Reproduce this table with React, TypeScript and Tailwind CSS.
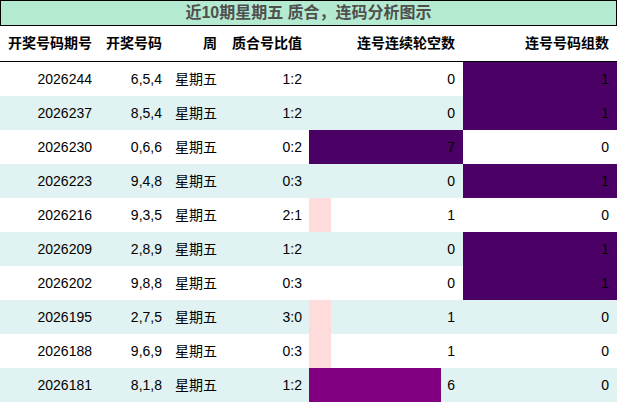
import React from "react";

const rows = [
  ["2026244", "6,5,4", "1:2", 0, 1],
  ["2026237", "8,5,4", "1:2", 0, 1],
  ["2026230", "0,6,6", "0:2", 7, 0],
  ["2026223", "9,4,8", "0:3", 0, 1],
  ["2026216", "9,3,5", "2:1", 1, 0],
  ["2026209", "2,8,9", "1:2", 0, 1],
  ["2026202", "9,8,8", "0:3", 0, 1],
  ["2026195", "2,7,5", "3:0", 1, 0],
  ["2026188", "9,6,9", "0:3", 1, 0],
  ["2026181", "8,1,8", "1:2", 6, 0],
] as const;

const gapColor = (v: number) =>
  v >= 7 ? "#4b0066" : v >= 6 ? "#800080" : v >= 1 ? "#fddcdb" : "transparent";

const cols = "grid grid-cols-[100px_70px_55px_84px_154px_154px]";

export default function App() {
  return (
    <div
      className="w-[618px] h-[403px] bg-white text-black"
      style={{ fontFamily: '"Liberation Sans", "Noto Sans CJK SC", sans-serif' }}
    >
      <div className="w-[617px] h-[26px] border border-black bg-[#b4ebd0] flex items-center justify-center text-[16px] font-bold text-[#4f4f4f]">
        近10期星期五 质合，连码分析图示
      </div>
      <div className={`${cols} w-[617px] h-[36px] border-b border-black text-[14px] font-bold items-center`}>
        <div className="text-right pr-[8px]">开奖号码期号</div>
        <div className="text-right pr-[8px]">开奖号码</div>
        <div className="text-right pr-[8px]">周</div>
        <div className="text-right pr-[7px]">质合号比值</div>
        <div className="text-right pr-[8px]">连号连续轮空数</div>
        <div className="text-right pr-[8px]">连号号码组数</div>
      </div>
      {rows.map((r, i) => (
        <div
          key={r[0]}
          className={`${cols} w-[617px] h-[34px] text-[14px] ${i % 2 === 1 ? "bg-[#e0f2f1]" : "bg-white"}`}
        >
          <div className="flex items-center justify-end pr-[8px]">{r[0]}</div>
          <div className="flex items-center justify-end pr-[8px]">{r[1]}</div>
          <div className="flex items-center justify-end pr-[8px]">星期五</div>
          <div className="flex items-center justify-end pr-[7px]">{r[2]}</div>
          <div className="relative flex items-center justify-end pr-[8px]">
            <div
              className="absolute left-0 top-0 bottom-0"
              style={{ width: `${(r[3] / 7) * 154}px`, background: gapColor(r[3]) }}
            />
            <span className="relative">{r[3]}</span>
          </div>
          <div className="relative flex items-center justify-end pr-[8px]">
            <div
              className="absolute left-0 top-0 bottom-0"
              style={{ width: `${r[4] * 154}px`, background: r[4] ? "#4b0066" : "transparent" }}
            />
            <span className="relative">{r[4]}</span>
          </div>
        </div>
      ))}
    </div>
  );
}
